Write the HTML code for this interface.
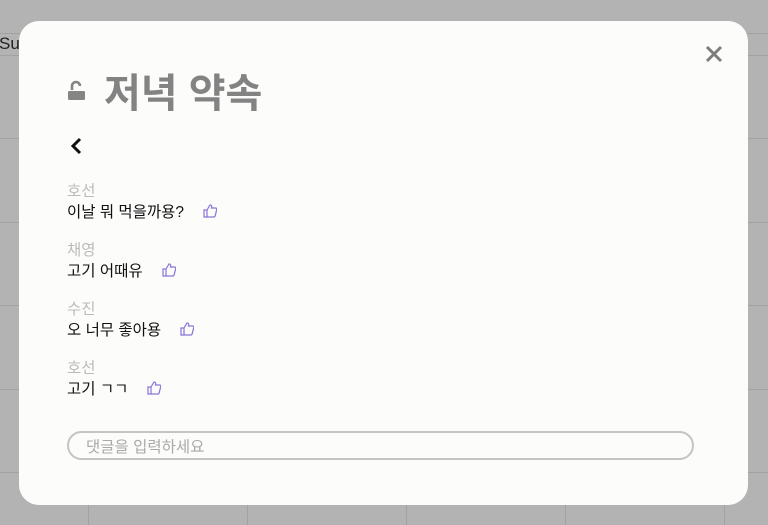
<!DOCTYPE html>
<html><head><meta charset="utf-8"><style>
*{margin:0;padding:0;box-sizing:border-box}
html,body{width:768px;height:525px}
body{background:#b3b3b3;position:relative;overflow:hidden;font-family:"Liberation Sans","Noto Sans CJK KR",sans-serif}
.h{position:absolute;left:0;width:768px;height:1px;background:#a2a2a2}
.v{position:absolute;top:472px;width:1px;height:53px;background:#a2a2a2}
.modal{position:absolute;left:19px;top:21px;width:729px;height:484px;background:#fcfcfa;border-radius:20px}
.title{position:absolute;top:40px;font-size:40px;font-weight:bold;color:#838383}
.name{position:absolute;left:48px;font-size:15.5px;color:#bbb}
.msg{position:absolute;left:48px;font-size:15.5px;color:#111;display:flex;align-items:center}
.msg svg{margin-left:19px}
.input{position:absolute;left:48px;top:410px;width:627px;height:29px;border:2px solid #c4c4c4;border-radius:15px;font-size:15.5px;color:#a9a9a9;padding:2px 0 0 17px}
</style></head><body>
<div class="h" style="top:33px"></div><div class="h" style="top:55px"></div><div class="h" style="top:138px"></div><div class="h" style="top:222px"></div><div class="h" style="top:305px"></div><div class="h" style="top:389px"></div><div class="h" style="top:472px"></div>
<div class="v" style="left:88px"></div><div class="v" style="left:247px"></div><div class="v" style="left:406px"></div><div class="v" style="left:565px"></div><div class="v" style="left:724px"></div>
<div style="position:absolute;left:-1px;top:34px;font-size:17px;color:#222">Sun</div>
<div class="modal">
<svg style="position:absolute;left:686px;top:24px" width="18" height="18" viewBox="0 0 18 18"><path d="M2 2L16 16M16 2L2 16" stroke="#7d7d7d" stroke-width="3"/></svg>
<svg style="position:absolute;left:48px;top:58px" width="20" height="22" viewBox="0 0 20 22"><path d="M5 11V7a4 4 0 0 1 8 0" fill="none" stroke="#858585" stroke-width="2.6"/><rect x="1" y="12" width="17" height="9" rx="1.5" fill="#858585"/></svg>
<div class="title" style="left:85px">저녁 약속</div>
<svg style="position:absolute;left:50px;top:116px" width="14" height="18" viewBox="0 0 14 18"><path d="M11 2L4 9l7 7" fill="none" stroke="#111" stroke-width="3"/></svg>
<div class="name" style="top:158px">호선</div>
<div class="msg" style="top:179px">이날 뭐 먹을까용?<svg width="14" height="14" viewBox="0 0 14 14"><path d="M1 6h3v7H1zM4 6l3-5c1.5 0 2 1 1.5 3H12.5c1 0 1.5.8 1.2 1.7l-1.5 6c-.2.8-.8 1.3-1.6 1.3H4" fill="none" stroke="#8a74d8" stroke-width="1.2"/></svg></div>
<div class="name" style="top:217px">채영</div>
<div class="msg" style="top:238px">고기 어때유<svg width="14" height="14" viewBox="0 0 14 14"><path d="M1 6h3v7H1zM4 6l3-5c1.5 0 2 1 1.5 3H12.5c1 0 1.5.8 1.2 1.7l-1.5 6c-.2.8-.8 1.3-1.6 1.3H4" fill="none" stroke="#8a74d8" stroke-width="1.2"/></svg></div>
<div class="name" style="top:276px">수진</div>
<div class="msg" style="top:297px">오 너무 좋아용<svg width="14" height="14" viewBox="0 0 14 14"><path d="M1 6h3v7H1zM4 6l3-5c1.5 0 2 1 1.5 3H12.5c1 0 1.5.8 1.2 1.7l-1.5 6c-.2.8-.8 1.3-1.6 1.3H4" fill="none" stroke="#8a74d8" stroke-width="1.2"/></svg></div>
<div class="name" style="top:335px">호선</div>
<div class="msg" style="top:356px">고기 ㄱㄱ<svg width="14" height="14" viewBox="0 0 14 14"><path d="M1 6h3v7H1zM4 6l3-5c1.5 0 2 1 1.5 3H12.5c1 0 1.5.8 1.2 1.7l-1.5 6c-.2.8-.8 1.3-1.6 1.3H4" fill="none" stroke="#8a74d8" stroke-width="1.2"/></svg></div>
<div class="input">댓글을 입력하세요</div>
</div>
</body></html>
